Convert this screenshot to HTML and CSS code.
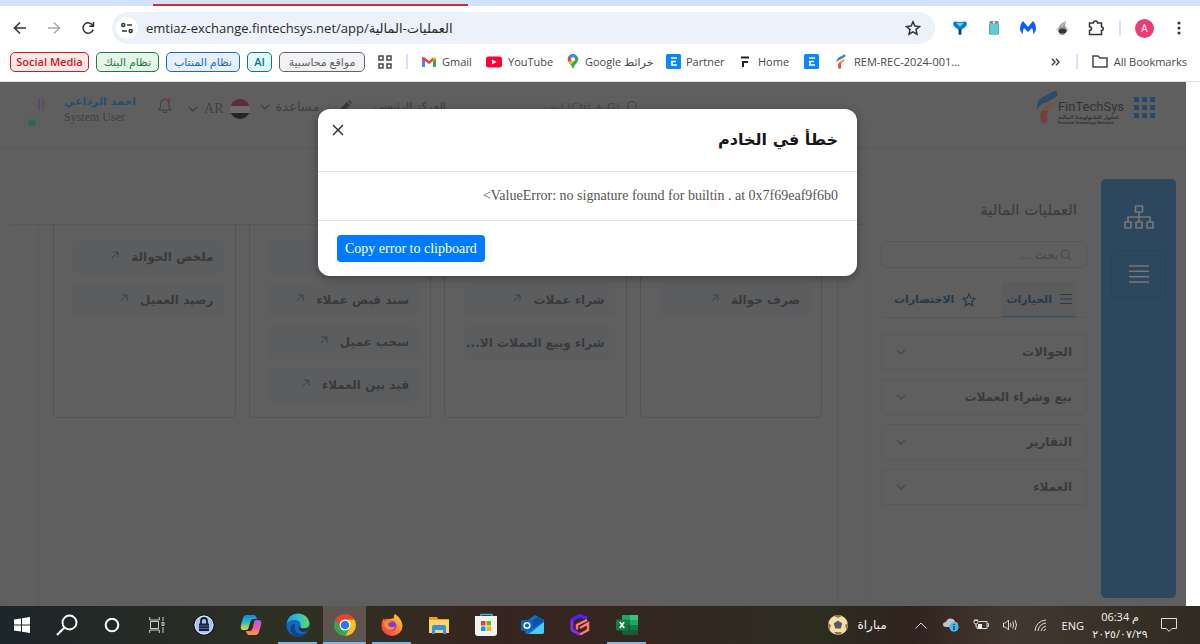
FILE: index.html
```html
<!DOCTYPE html>
<html lang="ar">
<head>
<meta charset="utf-8">
<title>العمليات المالية</title>
<link rel="stylesheet" href="styles.css">
</head>
<body>
<svg class="defs" aria-hidden="true">
  <symbol id="chev" viewBox="0 0 10 10"><path d="M1 3l4 4 4-4" fill="none" stroke="currentColor" stroke-width="1.4"/></symbol>
  <symbol id="arrow" viewBox="0 0 8 8"><path d="M.8 7.2L7 1M1.500 1H7v5.500" fill="none" stroke="currentColor" stroke-width=".9"/></symbol>
  <symbol id="mag" viewBox="0 0 14 14"><circle cx="6" cy="6" r="4.500" fill="none" stroke="currentColor" stroke-width="1.200"/><path d="M9.500 9.500L13 13" stroke="currentColor" stroke-width="1.200"/></symbol>
  <symbol id="fin" viewBox="0 0 22 34"><path d="M1 20C0 11 4 8 12 4.500L18 1c3-1 5 4 2 6l-9 5C5 14 3 16 1 20z" fill="var(--f1)"/><path d="M5 23c1-6 4-7 8-9l3-2c3-1 4 3 2 5l-6 4c-3 2-1 8-2 11-2 3-6 1-6-2-1-3 0-5 1-7z" fill="var(--f2)"/><path d="M5 23c2-4 5-2 7-2-2 3 0 8-1 11-2 3-6 1-6-2-1-3-1-5 0-7z" fill="var(--f3)"/></symbol>
  <symbol id="ebadge" viewBox="0 0 15 15"><rect width="15" height="15" rx="1.500" fill="#0a86ff"/><path d="M5 4h6M5 7.500h5M5 11h6M6 7v4" stroke="#fff" stroke-width="1.600" fill="none"/></symbol>
</svg>

<header class="browser">
  <div class="tabstrip"><span class="tabline"></span></div>
  <div class="toolbar">
    <button class="ico" aria-label="Back"><svg width="14" height="14" viewBox="0 0 14 14"><path d="M13 7H2M7 1.500L1.500 7 7 12.500" class="ln"/></svg></button>
    <button class="ico dim" aria-label="Forward"><svg width="14" height="14" viewBox="0 0 14 14"><path d="M1 7h11M7 1.500L12.500 7 7 12.500" class="ln"/></svg></button>
    <button class="ico" aria-label="Reload"><svg width="14" height="14" viewBox="0 0 14 14"><path d="M12 5A5.200 5.200 0 1 0 12.200 8.500M12.500 1v4.300H8.200" class="ln"/></svg></button>
    <div class="omnibox">
      <button class="siteinfo" aria-label="Site information"><svg width="12" height="12" viewBox="0 0 12 12"><circle cx="2.300" cy="3" r="1.500" class="ln"/><path d="M6 3h5M1 9h5" class="ln"/><circle cx="9.700" cy="9" r="1.500" class="ln"/></svg></button>
      <input class="url" dir="ltr" aria-label="Address" value="emtiaz-exchange.fintechsys.net/app/العمليات-المالية">
      <button class="star" aria-label="Bookmark"><svg width="16" height="16" viewBox="0 0 16 16"><path d="M8 1.800l1.900 4.300 4.600.4-3.500 3.100 1 4.600L8 11.800l-4 2.400 1-4.600L1.500 6.500l4.600-.4z" class="ln"/></svg></button>
    </div>
    <div class="exts">
      <button aria-label="Filter"><svg width="16" height="16" viewBox="0 0 16 16"><path d="M1 4Q1 1 4 1.500q4 1.500 8 0Q15 1 15 4 14 7 9.500 9.500V14.500h-3V9.500Q2 7 1 4z" fill="#087bd0"/><path d="M4 2.500q4 1.500 8 0L8 7z" fill="#6fd1fa"/><path d="M7 9h2v5.500H7z" fill="#043a75"/></svg></button>
      <button aria-label="Clipboard"><svg width="16" height="16" viewBox="0 0 16 16"><rect x="3" y="1" width="10" height="14" rx="2" fill="#62cbd8"/><path d="M4 1h8v2l-2 1H6L4 3z" fill="#8a8a76"/><circle cx="8" cy="2.500" r="1.200" fill="#eee"/><path d="M3.500 4v10M12.500 4v10" stroke="#739fa3"/></svg></button>
      <button aria-label="Malwarebytes"><svg width="16" height="16" viewBox="0 0 16 16"><path d="M3 1l5 6 5-6q3 3 3 7t-3 6q.5-4-1-6L8 12 4 8q-1.500 2-1 6-3-2-3-6t3-7z" fill="#0b5cff"/></svg></button>
      <button aria-label="Recorder"><svg width="16" height="16" viewBox="0 0 16 16"><path d="M4 9Q6 3 12 1l-1 5 3 4-4 5H6z" fill="#999"/><path d="M1 8l7 2 7-2-5 5H6z" fill="#c6c6c6"/><ellipse cx="8.500" cy="11" rx="4" ry="2.500" fill="#333"/><path d="M7 7l4-5" stroke="#ddd"/></svg></button>
      <button aria-label="Extensions"><svg width="16" height="16" viewBox="0 0 16 16"><path d="M1.500 3h4q0-2 2-2t2 2h4v4q1.800 0 1.800 1.700T13.500 10.500V14.500h-12v-4q2 0 2-1.900t-2-1.900z" class="ln"/></svg></button>
    </div>
    <span class="vsep"></span>
    <button class="profile">A</button>
    <button class="dots" aria-label="Menu"><svg width="4" height="14" viewBox="0 0 4 14"><circle cx="2" cy="2" r="1.500"/><circle cx="2" cy="7" r="1.500"/><circle cx="2" cy="12" r="1.500"/></svg></button>
  </div>
  <nav class="bookmarks">
    <button class="chip red">Social Media</button>
    <button class="chip green">نظام البنك</button>
    <button class="chip blue">نظام المنتاب</button>
    <button class="chip teal">AI</button>
    <button class="chip gray">مواقع محاسبية</button>
    <button class="apps" aria-label="Apps"><svg width="14" height="14" viewBox="0 0 14 14"><path d="M1 1h4v4H1zM9 1h4v4H9zM1 9h4v4H1zM9 9h4v4H9z" class="ln"/></svg></button>
    <span class="vsep"></span>
    <a href="#" class="bm w1"><svg width="14" height="12" viewBox="0 0 14 12"><path d="M0 2l3 2v7H1q-1 0-1-1z" fill="#4285f4"/><path d="M14 2l-3 2v7h2q1 0 1-1z" fill="#34a853"/><path d="M11 2.500L13 1q1 0 1 1.500L11 5z" fill="#fbbc04"/><path d="M0 2q0-1.500 2-1l5 4 4-3.500V5L7 8 0 3z" fill="#ea4335"/></svg>Gmail</a>
    <a href="#" class="bm w2"><svg width="16" height="12" viewBox="0 0 16 12"><rect width="16" height="11" y=".5" rx="2.500" fill="#f03"/><path d="M6 3.500v5L10.500 6z" fill="#fff"/></svg>YouTube</a>
    <a href="#" class="bm w3"><svg width="12" height="15" viewBox="0 0 12 15"><path d="M6 0q5 .5 5.300 5.500Q11 8 8 11q-1 2-2 4-1-3-3-5Q1 8 .7 5.500 1 .5 6 0z" fill="#34a853"/><path d="M6 0Q2 .3 1 4l3 3 5-6z" fill="#4285f4"/><path d="M1.500 3Q0 5 1.300 7.500L5 6z" fill="#ea4335"/><path d="M1.300 7.500Q2 9.500 4 11l4-5z" fill="#fbbc04"/><circle cx="6" cy="5.300" r="2" fill="#fff"/></svg><span>Google خرائط</span></a>
    <a href="#" class="bm w4"><svg width="15" height="15"><use href="#ebadge"/></svg>Partner</a>
    <a href="#" class="bm w5"><svg width="10" height="12" viewBox="0 0 10 12"><path d="M1 1.500h8M2 6h6M3 6v5" stroke="#222" stroke-width="2" fill="none"/></svg>Home</a>
    <a href="#" class="bm w6" aria-label="ERP"><svg width="15" height="15"><use href="#ebadge"/></svg></a>
    <a href="#" class="bm bright"><svg width="10" height="15" viewBox="0 0 22 34"><use href="#fin"/></svg>REM-REC-2024-001...</a>
    <button class="more" aria-label="More bookmarks"><svg width="9" height="8" viewBox="0 0 9 8"><path d="M1 .8L4 4 1 7.200M5 .8L8 4 5 7.200" class="ln"/></svg></button>
    <span class="vsep"></span>
    <a href="#" class="bm"><svg width="16" height="13" viewBox="0 0 16 13"><path d="M1 1h5l2 2h7v9H1z" class="ln"/></svg>All Bookmarks</a>
  </nav>
</header>

<div class="viewport">
<main class="app" dir="rtl">
  <header class="apphead">
    <button class="grid9" aria-label="التطبيقات"><svg width="21" height="21" viewBox="0 0 21 21"><path d="M0 0h5v5H0zM8 0h5v5H8zM16 0h5v5h-5zM0 8h5v5H0zM8 8h5v5H8zM16 8h5v5h-5zM0 16h5v5H0zM8 16h5v5H8zM16 16h5v5h-5z" fill="currentColor"/></svg></button>
    <a href="#" class="brand" dir="ltr"><svg width="22" height="34"><use href="#fin"/></svg>
      <span class="brandtext"><b>FinTechSys</b><i>لحلول التكنولوجيا المالية</i><small>Financial Technology Solutions</small></span></a>
    <label class="topsearch"><svg width="14" height="14"><use href="#mag"/></svg><input aria-label="بحث" placeholder="(Ctrl + G) ابحث"></label>
    <span class="center">المركز الرئيسي</span>
    <svg class="pencil" width="12" height="12" viewBox="0 0 12 12"><path d="M0 12l1-4 6-6 3 3-6 6zM8 1l1-1q1 0 3 3l-1 1z" fill="currentColor"/></svg>
    <button class="help">مساعدة <svg width="10" height="10"><use href="#chev"/></svg></button>
    <button class="lang"><svg width="20" height="20" viewBox="0 0 20 20"><clipPath id="fc"><circle cx="10" cy="10" r="10"/></clipPath><g clip-path="url(#fc)"><path d="M0 0h20v7H0z" fill="#5e2c34"/><path d="M0 7h20v7H0z" fill="#6b6b6b"/><path d="M0 14h20v6H0z" fill="#242424"/></g></svg><span>AR</span><svg width="10" height="10"><use href="#chev"/></svg></button>
    <button class="bell" aria-label="الإشعارات"><svg width="16" height="18" viewBox="0 0 16 18"><path d="M2 13q1.500-1.500 1.500-4V7q0-4 4-4.500t4.500 4.500v2q0 2.500 2 4zM6 14.500q2 2 4 0M7.500 1v1.500" fill="none" stroke="currentColor" stroke-width="1.100"/><circle cx="12" cy="3" r="2" fill="#7c3a3a"/></svg></button>
    <div class="user"><strong>احمد الرداعي</strong><span dir="ltr">System User</span></div>
    <div class="avatar"><span>||</span><i></i></div>
  </header>
  <div class="body">
    <aside class="rail">
      <button aria-label="الهيكل"><svg width="30" height="24" viewBox="0 0 30 24"><path d="M11.500 1h7v6h-7zM15 7v10M4 17v-5h22v5M1 17h6v6H1zM12 17h6v6h-6zM23 17h6v6h-6z" fill="none" stroke="currentColor" stroke-width="1.700" stroke-linejoin="round"/></svg></button>
      <button class="on" aria-label="القائمة"><svg width="20" height="20" viewBox="0 0 20 20"><path d="M0 2h20M0 7.300h20M0 12.700h20M0 18h20" stroke="currentColor" stroke-width="1.600"/></svg></button>
    </aside>
    <aside class="panel">
      <h2>العمليات المالية</h2>
      <label class="find"><svg width="12" height="12"><use href="#mag"/></svg><input aria-label="بحث" placeholder="بحث ..."></label>
      <nav class="tabs">
        <button class="on"><svg width="12" height="12" viewBox="0 0 12 12"><path d="M0 1.500h12M0 6h12M0 10.500h12" stroke="currentColor" stroke-width="1.200"/></svg>الخيارات</button>
        <button><svg width="14" height="14" viewBox="0 0 16 16"><path d="M8 1l2.100 4.700 5 .5-3.800 3.400 1.100 5L8 12l-4.400 2.600 1.100-5L.9 6.200l5-.5z" fill="none" stroke="currentColor" stroke-width="1.400"/></svg>الاختصارات</button>
      </nav>
      <div class="acc">
        <button>الحوالات<svg width="10" height="10"><use href="#chev"/></svg></button>
        <button>بيع وشراء العملات<svg width="10" height="10"><use href="#chev"/></svg></button>
        <button>التقارير<svg width="10" height="10"><use href="#chev"/></svg></button>
        <button>العملاء<svg width="10" height="10"><use href="#chev"/></svg></button>
      </div>
    </aside>
    <section class="work">
      <div class="pagehead"></div>
      <div class="cards">
        <div class="card"><a href="#" aria-label="حوالة"></a><a href="#"><span>صرف حوالة</span><svg width="8" height="8"><use href="#arrow"/></svg></a></div>
        <div class="card"><a href="#" aria-label="عملات"></a><a href="#"><span>شراء عملات</span><svg width="8" height="8"><use href="#arrow"/></svg></a><a href="#"><span>شراء وبيع العملات الا...</span></a></div>
        <div class="card"><a href="#" aria-label="سند"></a><a href="#"><span>سند قبض عملاء</span><svg width="8" height="8"><use href="#arrow"/></svg></a><a href="#"><span>سحب عميل</span><svg width="8" height="8"><use href="#arrow"/></svg></a><a href="#"><span>قيد بين العملاء</span><svg width="8" height="8"><use href="#arrow"/></svg></a></div>
        <div class="card"><a href="#"><span>ملخص الحوالة</span><svg width="8" height="8"><use href="#arrow"/></svg></a><a href="#"><span>رصيد العميل</span><svg width="8" height="8"><use href="#arrow"/></svg></a></div>
      </div>
    </section>
  </div>
  <div class="overlay">
    <div class="modal" role="dialog" aria-labelledby="mt">
      <div class="mhead"><h1 id="mt">خطأ في الخادم</h1><button aria-label="إغلاق"><svg width="12" height="12" viewBox="0 0 12 12"><path d="M1 1l10 10M11 1L1 11" stroke="#222" stroke-width="1.300"/></svg></button></div>
      <p class="mbody"><bdi dir="ltr">&lt;ValueError: no signature found for builtin . at 0x7f69eaf9f6b0</bdi></p>
      <div class="mfoot"><button dir="ltr">Copy error to clipboard</button></div>
    </div>
  </div>
</main>
</div>

<footer class="taskbar">
  <div class="pins">
    <button class="t45" aria-label="Start"><svg width="16" height="16" viewBox="0 0 16 16"><path d="M0 2.500l7-1v6H0zM8 1.300L16 0v7.500H8zM0 8.500h7v6l-7-1zM8 8.500h8V16l-8-1.300z" fill="#fff"/></svg></button>
    <button class="t45" aria-label="Search"><svg width="22" height="22" viewBox="0 0 22 22"><circle cx="13.500" cy="8.500" r="7" fill="none" stroke="#fff" stroke-width="1.900"/><path d="M8.500 13.500L1 21" stroke="#fff" stroke-width="2.200"/></svg></button>
    <button class="t45" aria-label="Cortana"><svg width="16" height="16" viewBox="0 0 16 16"><circle cx="8" cy="8" r="6.300" fill="none" stroke="#fff" stroke-width="2"/></svg></button>
    <button class="t45" aria-label="Task view"><svg width="16" height="16" viewBox="0 0 16 16"><path d="M.7 0v3h9.600V0M.7 16v-3h9.600v3M1.500 4.500h8v7h-8zM14 0v4M14 10v6M13 5.500h2v3h-2z" fill="none" stroke="#ccc"/></svg></button>
    <button aria-label="Vault"><svg width="22" height="22" viewBox="0 0 22 22"><circle cx="11" cy="11" r="10" fill="#a9c1f8" stroke="#111" stroke-width="1.200"/><circle cx="11" cy="11" r="9" fill="none" stroke="#dce7ff"/><path d="M8 10V7q0-3 3-3t3 3v3" fill="none" stroke="#122" stroke-width="1.800"/><rect x="6" y="9.500" width="10" height="7.500" fill="#14213c"/><path d="M6 12h10M6 14.500h10" stroke="#7e94ca" stroke-width=".6"/></svg></button>
    <button aria-label="Copilot"><svg width="22" height="22" viewBox="0 0 22 22"><defs><linearGradient id="cp1" x2="0" y2="1"><stop stop-color="#1686e8"/><stop offset=".5" stop-color="#25c0c2"/><stop offset="1" stop-color="#f4d52b"/></linearGradient><linearGradient id="cp2" x2="0" y2="1"><stop stop-color="#a95bea"/><stop offset=".5" stop-color="#f05aa2"/><stop offset="1" stop-color="#ff9a4a"/></linearGradient></defs><path d="M6 1h8q2 0 3 4h-4q-2 0-3 4l-1.500 5Q8 16 6 16H3q-3 0-2-5l2-7q1-3 3-3z" fill="url(#cp1)"/><path d="M16 6h3q3 0 2 5l-2 7q-1 3-3 3H9q-2 0-3-4h4q2 0 3-4l1-5q.5-2 2-2z" fill="url(#cp2)"/></svg></button>
    <button class="run" aria-label="Edge"><svg width="24" height="24" viewBox="0 0 24 24"><defs><linearGradient id="eg"><stop stop-color="#1c9de6"/><stop offset=".6" stop-color="#35c6c0"/><stop offset="1" stop-color="#67d84c"/></linearGradient></defs><circle cx="12" cy="12" r="11.500" fill="#1369bf"/><path d="M.6 11Q2 .5 12.500.5 22 1.500 23.500 10q0 5.500-6 5.500-4 0-3-2.500 1-5-5-6Q3 6.500.6 11z" fill="url(#eg)"/><path d="M9 11q-2 8 6 10 3 0 6-2-4 5-10 4.500Q4 22 4 15.500 5 11 9 11z" fill="#0b458f"/><path d="M14.500 13q-1 2.500 3 2.500 3.500 0 5-2 .5 2-1 4.500-5 2-8-.500-2-3 1-4.500z" fill="#34302b"/></svg></button>
    <button class="run active" aria-label="Chrome"><svg width="22" height="22" viewBox="0 0 22 22"><path d="M1.500 5.500A11 11 0 0 1 20.500 5.500H11L6.200 13.700z" fill="#ea4335"/><path d="M20.500 5.500A11 11 0 0 1 11 22l4.800-8.300L11 5.500z" fill="#fbc116"/><path d="M1.500 5.500A11 11 0 0 0 11 22l4.800-8.300H6.200z" fill="#34a853"/><circle cx="11" cy="11" r="5.500" fill="#fff"/><circle cx="11" cy="11" r="4.300" fill="#2f78ec"/></svg></button>
    <button class="run" aria-label="Firefox"><svg width="22" height="22" viewBox="0 0 22 22"><defs><linearGradient id="ff" x1="1" x2="0" y2="1"><stop stop-color="#ffe43a"/><stop offset=".5" stop-color="#ff7b2b"/><stop offset="1" stop-color="#f0246b"/></linearGradient></defs><path d="M14 0q7 5 7.500 12A10.500 10 0 0 1 .5 12Q.5 7 3 4l1 2.500Q5 4 7 5q3 0 6-1-1-2 1-4z" fill="url(#ff)"/><circle cx="10.500" cy="12" r="5" fill="#7a3be0"/><path d="M3 9q4-4 8-1-4 0-4 3 3 4 8 1-2 5-7 4-5-2-5-7z" fill="#ff8a28"/></svg></button>
    <button aria-label="Files"><svg width="22" height="20" viewBox="0 0 22 20"><path d="M1 2h8l1 2h11v13H1z" fill="#e9a61c"/><path d="M1 5h20v13H1z" fill="#ffd465"/><path d="M4 19v-7q0-2 2-2h10q2 0 2 2v7h-3v-4H7v4z" fill="#3c91d8"/></svg></button>
    <button aria-label="Store"><svg width="22" height="24" viewBox="0 0 22 24"><path d="M6 4V1.500h11V4" fill="none" stroke="#3bb2e8" stroke-width="1.400"/><path d="M0 3h22v17q0 3-3 3H3q-3 0-3-3z" fill="#f2f2f2"/><path d="M6 8h4.500v4.500H6z" fill="#f03f20"/><path d="M11.500 8H16v4.500h-4.500z" fill="#72b800"/><path d="M6 13.500h4.500V18H6z" fill="#00a0ed"/><path d="M11.500 13.500H16V18h-4.500z" fill="#fdb300"/></svg></button>
    <button aria-label="Outlook"><svg width="24" height="20" viewBox="0 0 24 20"><path d="M4 7L14 0l9 5v12q0 2-2 2H7q-3 0-3-3z" fill="#1473c8"/><path d="M8 8l9-6 6 4-12 8z" fill="#0f4eaa"/><path d="M23 7v10q0 2-2 2H8z" fill="#50c8f4"/><rect y="5" width="12" height="11" rx="1.500" fill="#0f64bd"/><circle cx="6" cy="10.500" r="2.800" fill="none" stroke="#fff" stroke-width="1.500"/></svg></button>
    <button aria-label="G app"><svg width="22" height="22" viewBox="0 0 22 22"><path d="M18 4.500L11 1.500 3 6v10l8 4.500" fill="none" stroke="#8a28f5" stroke-width="3"/><path d="M18 4.500L11 1.500 3 6" fill="none" stroke="#4a22f5" stroke-width="3"/><path d="M11 20.500l8-4.500V9.500l-8 4.500M18 6L8 11v4.500" fill="none" stroke="#ff796e" stroke-width="2.500"/></svg></button>
    <button class="run" aria-label="Excel"><svg width="22" height="20" viewBox="0 0 22 20"><path d="M6 0h16v20H6z" fill="#21a366"/><path d="M6 5h8v5H6z" fill="#107c41"/><path d="M14 0h8v5h-8z" fill="#33c481"/><path d="M6 10h16v10H6z" fill="#185c37"/><path d="M14 10h8v5h-8z" fill="#107c41"/><rect y="4.500" width="12" height="11" rx="1" fill="#107c41"/><path d="M3.800 7l4.400 6M8.200 7l-4.400 6" stroke="#fff" stroke-width="1.600"/></svg></button>
  </div>
  <div class="tray">
    <button class="news"><svg width="20" height="20" viewBox="0 0 20 20"><circle cx="10" cy="10" r="10" fill="#f5dfa4"/><path d="M10 5.500l4.300 3-1.600 5H7.300l-1.600-5z" fill="#555a60"/><path d="M6 .9Q10-1 14 .9L10 3zM0 8l3 2-1.500 5Q0 12 0 8zM20 8l-3 2 1.500 5Q20 12 20 8zM6 17h8l-2 2.800H8z" fill="#8d7b52"/></svg>مباراة</button>
    <button class="ti" aria-label="Hidden icons"><svg width="12" height="7" viewBox="0 0 12 7"><path d="M.5 6.500L6 1l5.500 5.500" class="tw"/></svg></button>
    <button class="ti" aria-label="Cloud"><svg width="16" height="14" viewBox="0 0 16 14"><path d="M3 9q-3 0-3-2.500T3 4q1-4 5-3.500T12 4q3 0 3 3l-2 2z" fill="#c2c2c2"/><circle cx="11" cy="9" r="4.700" fill="#48b8f0"/><path d="M11 8v4M11 6v1" stroke="#123" stroke-width="1.200"/></svg></button>
    <button class="ti" aria-label="Battery"><svg width="16" height="12" viewBox="0 0 16 12"><path d="M6 2.500h8v7H4V7M14.500 4.500h1v3h-1M1 1.500h4v2Q5 5 3 5T1 3.500zM2 0v1M4 0v1M3 5v3" class="tw"/><path d="M5 5h4v4H5z" fill="#eee"/></svg></button>
    <button class="ti" aria-label="Volume"><svg width="15" height="12" viewBox="0 0 15 12"><path d="M.5 4h2l3-3v10l-3-3h-2zM7.500 4q1 2 0 4M9.700 2.500q2 3.500 0 7M12 1q3 5 0 10" class="tw"/></svg></button>
    <button class="ti" aria-label="Network"><svg width="13" height="13" viewBox="0 0 13 13"><path d="M1 12Q2 2 12 1M4 12q1-7 8-8M7 12q.5-4 5-5M10 12q0-1.500 2-2" class="tw"/></svg></button>
    <span class="eng">ENG</span>
    <time><span>06:34 م</span><span>٢٠٢٥/٠٧/٢٩</span></time>
    <button class="note" aria-label="Notifications"><svg width="16" height="16" viewBox="0 0 16 16"><path d="M.5 1.500h15v10H11l-3 3-2.500-3h-5z" class="tw"/></svg></button>
  </div>
</footer>
</body>
</html>
```
FILE: styles.css
```css
* { box-sizing: border-box; }
body { margin: 0; min-height: 100vh; display: flex; flex-direction: column; font-family: "Open Sans", "DejaVu Sans", sans-serif; font-size: 12px; color: #474747; background: #fff; }
button { font: inherit; color: inherit; background: none; border: 0; padding: 0; display: flex; align-items: center; justify-content: center; white-space: nowrap; }
a { color: inherit; text-decoration: none; }
input { font: inherit; color: inherit; border: 0; background: none; padding: 0; min-width: 0; outline: 0; }
svg { flex: none; display: block; }
.defs { position: absolute; width: 0; height: 0; }
.ln { fill: none; stroke: currentColor; stroke-width: 1.5; }
.vsep { width: 2px; height: 15px; background: #d3e3fd; flex: none; }

/* browser frame */
.tabstrip { height: 6px; background: #d3e3fd; padding: 4px 0 0 153px; }
.tabline { display: block; width: 315px; height: 2px; background: #dc2828; }
.toolbar { height: 44px; display: flex; align-items: center; padding: 0 19px 0 13px; background: #fff; }
.ico { width: 14px; margin-right: 20px; color: #333; }
.ico.dim { color: #aaa; }
.omnibox { flex: 1; height: 32px; border-radius: 16px; background: #ecf1fa; display: flex; align-items: center; padding: 0 14px 0 4px; margin-right: 17px; margin-left: -3px; }
.siteinfo { width: 22px; height: 22px; border-radius: 50%; background: #fff; color: #333; margin-right: 8px; }
.url { flex: 1; font-size: 13px; line-height: 20px; color: #2a2a2a; }
.star { color: #333; }
.exts { display: flex; gap: 18px; margin-right: 15px; color: #333; }
.profile { width: 19px; height: 19px; border-radius: 50%; background: #ea3d78; color: #fff; font-size: 10px; margin: 0 23px 0 14px; }
.dots { fill: #333; }
.bookmarks { height: 32px; display: flex; align-items: center; padding: 0 13px 8px 10px; border-bottom: 1px solid #ddd; background: #fff; font-size: 11px; line-height: 16px; white-space: nowrap; }
.chip { height: 20px; border: 1px solid; border-radius: 5px; margin-right: 7px; font-weight: 600; flex: none; }
.red { width: 79px; color: #c5221f; background: #fce8e6; }
.green { width: 63px; color: #188038; background: #e6f4ea; }
.blue { width: 74px; color: #1967d2; background: #e8f0fe; }
.teal { width: 25px; color: #007b83; background: #e4f7fb; }
.gray { width: 86px; color: #5f6368; background: #f1f3f4; }
.green, .blue, .gray { font-weight: 400; }
.apps { margin: 0 14px 0 6px; }
.bookmarks .vsep { margin-right: 14px; }
.bm { display: flex; align-items: center; gap: 6px; flex: none; }
.w1 { width: 64px; } .w2 { width: 81px; } .w3 { width: 99px; } .w4 { width: 74px; } .w5 { width: 64px; } .w6 { width: 32px; }
.w4 { gap: 5px; }
.w5 { gap: 8px; }
.bright { --f1: #3d85c6; --f2: #f5a04a; --f3: #e05050; gap: 8px; }
.more { margin: 0 16px 0 auto; }

/* application */
.viewport { flex: 1; display: flex; padding-right: 14px; background: #fff; }
.app { flex: 1; position: relative; background: #5f5f5f; display: flex; flex-direction: column; font-family: "DejaVu Sans", sans-serif; color: #3a3a3a; }
.apphead { height: 66px; display: flex; align-items: flex-start; border-bottom: 1px solid #595959; padding: 15px 31px 0 26px; white-space: nowrap; }
.apphead > * { flex: none; }
.grid9 { color: #274a68; margin-left: 10px; }
.brand { display: flex; margin-top: -7px; --f1: #2c4b65; --f2: #735541; --f3: #703f40; margin-left: 383px; }
.brandtext { display: flex; flex-direction: column; color: #323232; padding-top: 9px; }
.brandtext b { font: 400 13px/15px Roboto, sans-serif; }
.brandtext i { font: 700 5px/6px "DejaVu Sans", sans-serif; }
.brandtext small { font: 700 4px/6px Roboto, sans-serif; }
.topsearch { width: 188px; height: 28px; border: 1px solid #566069; border-radius: 5px; display: flex; align-items: center; gap: 6px; padding: 0 12px; margin-top: -4px; color: #484848; }
.topsearch input { flex: 1; font-size: 11px; }
input::placeholder { color: #474747; opacity: 1; }
.center { font-size: 11px; line-height: 20px; margin-right: 19px; }
.pencil { margin: 3px 22px 0 21px; }
.help { gap: 6px; font-size: 13px; line-height: 20px; color: #404040; }
.lang { gap: 6px; font-family: "Liberation Serif", serif; font-size: 14px; margin: 2px 10px 0 0; color: #404040; }
.bell { margin: 0 15px 0 21px; color: #404040; }
.user { display: flex; flex-direction: column; align-items: flex-end; }
.user strong { color: #294d6e; font-size: 11px; line-height: 14px; font-weight: 700; margin-top: -2px; }
.user span { font: 12px/16px "Liberation Serif", serif; color: #404040; }
.avatar { position: relative; width: 30px; height: 34px; margin-right: auto; display: flex; justify-content: center; color: #5a3d6c; font-size: 12px; }
.avatar i { position: absolute; left: 2px; bottom: 4px; width: 8px; height: 8px; border-radius: 50%; background: #2b6b51; }
.body { flex: 1; display: flex; }
.rail { width: 75px; margin: 31px 10px 8px 0; border-radius: 5px; background: #2d475e; color: #777; display: flex; flex-direction: column; align-items: center; padding-top: 14px; gap: 9px; }
.rail button { width: 55px; height: 48px; border-radius: 5px; border: 1px solid transparent; }
.rail .on { border-color: #2a4258; }
.panel { width: 235px; border-left: 1px solid #5b5b5b; padding: 51px 14px 0; }
.panel h2 { font-size: 15px; font-weight: 400; line-height: 22px; margin: 0 10px 20px; }
.find { display: flex; align-items: center; height: 27px; border: 1px solid #575757; border-radius: 4px; padding: 0 14px; gap: 2px; color: #484848; }
.find input { flex: 1; font-size: 12px; }
.tabs { display: flex; margin-top: 14px; border-bottom: 1px solid #585858; padding-right: 11px; gap: 22px; color: #26384a; font-weight: 700; font-size: 11px; }
.tabs button { height: 35px; padding: 0 4px; gap: 8px; }
.tabs .on { border-bottom: 1px solid #2b5475; background: #5b5c5e; }
.acc { display: flex; flex-direction: column; gap: 9px; margin-top: 16px; }
.acc button { height: 36px; border: 1px solid #595959; border-radius: 4px; justify-content: space-between; padding: 0 14px; font-weight: 700; font-size: 12px; }
.acc svg { color: #484848; }
.work { flex: 1; display: flex; flex-direction: column; min-width: 0; }
.pagehead { height: 77px; border-bottom: 1px solid #595959; margin: 0 2px 0 10px; }
.cards { flex: 1; margin: 0 28px 0 38px; border: solid #595959; border-width: 0 1px; padding: 0 15px 0 14px; display: grid; grid-template-columns: repeat(4, 1fr); gap: 13px; align-items: start; }
.card { height: 193px; border: 1px solid #4b5661; border-top: 0; border-radius: 0 0 5px 5px; padding: 15px 11px 15px 18px; display: flex; flex-direction: column; gap: 9px; min-width: 0; }
.card a { height: 34px; border-radius: 7px; background: #5c5d5f; display: flex; align-items: center; gap: 12px; padding: 0 10px; font-weight: 700; font-size: 12px; white-space: nowrap; }
.card svg { margin-bottom: 4px; }

/* dialog */
.overlay { position: absolute; inset: 0; display: flex; justify-content: center; align-items: flex-start; padding: 27px 11px 0 0; }
.modal { width: 539px; background: #fff; border-radius: 12px; box-shadow: 0 2px 8px rgba(0,0,0,.35); color: #555; }
.mhead { height: 63px; display: flex; justify-content: space-between; align-items: flex-start; padding: 15px 19px 0 14px; border-bottom: 1px solid #e2e2e2; }
.mhead h1 { margin: 0; font-size: 16px; line-height: 32px; font-weight: 700; color: #171717; }
.mhead button { height: 12px; }
.mbody { margin: 0; height: 49px; line-height: 48px; padding: 0 19px; font-family: "Liberation Serif", serif; font-size: 14px; border-bottom: 1px solid #e2e2e2; }
.mfoot { display: flex; justify-content: flex-end; padding: 14px 19px; }
.mfoot button { height: 27px; padding: 0 8px; border-radius: 4px; background: #007bff; color: #fff; font-family: "Liberation Serif", serif; font-size: 14px; }

/* taskbar */
.taskbar { height: 38px; display: flex; justify-content: space-between; background: linear-gradient(90deg, #1c2529, #2f3022 25%, #36251f 42%, #33271f 55%, #2c2d20 68%, #30231f 76%, #43382f 84%, #302b22); color: #f2f2f2; }
.pins { display: flex; }
.pins button { width: 47px; border-bottom: 2px solid transparent; padding-top: 2px; }
.pins .t45 { width: 45px; }
.pins .t45:last-of-type, .pins .t45:first-child { width: 44px; }
.pins .t45 + button:not(.t45) { margin-left: 1px; }
.pins .run { width: 39px; margin: 0 4px; border-color: #76b9ed; }
.pins .active { width: 43px; margin: 0 2px; background: #5d554e; }
.tw { fill: none; stroke: #ddd; stroke-width: 1; }
.tray { display: flex; align-items: center; padding-right: 23px; }
.news { gap: 9px; font: 12px/20px "DejaVu Sans", sans-serif; margin-right: 19px; }
.ti { width: 30px; }
.eng { font-size: 11px; margin: 0 9px 0 6px; }
.tray time { display: flex; flex-direction: column; align-items: center; font-size: 11px; line-height: 17px; width: 54px; white-space: nowrap; margin-right: 14px; }
```
